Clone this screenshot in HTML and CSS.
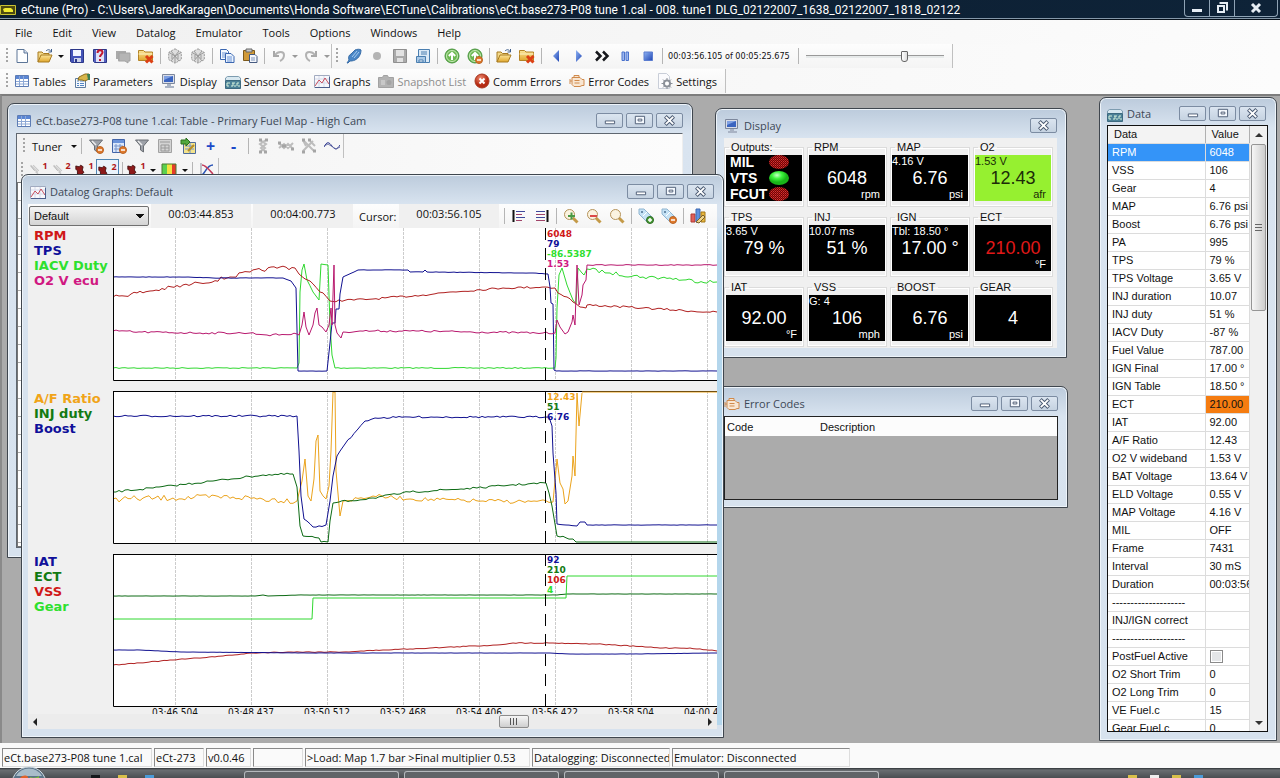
FILE: index.html
```html
<!DOCTYPE html>
<html lang="en">
<head>
    <meta charset="UTF-8">
    <meta name="viewport" content="width=device-width, initial-scale=1.0">
    <title>eCtune (Pro)</title>
    <link rel="stylesheet" href="styles.css">
</head>
<body>
    <svg class="sprite" aria-hidden="true">
        <defs>
            <linearGradient id="gBlue" x1="0" y1="0" x2="1" y2="1"><stop offset="0" stop-color="#8fb4f4"/><stop offset="1" stop-color="#2146b4"/></linearGradient>
            <linearGradient id="gFold" x1="0" y1="0" x2="0" y2="1"><stop offset="0" stop-color="#fbe59a"/><stop offset="1" stop-color="#e0a62c"/></linearGradient>
            <radialGradient id="gRed" cx="0.4" cy="0.3"><stop offset="0" stop-color="#f08a70"/><stop offset="1" stop-color="#b52a12"/></radialGradient>
            <radialGradient id="gLed" cx="0.4" cy="0.3"><stop offset="0" stop-color="#c8ffc8"/><stop offset="0.5" stop-color="#3df53d"/><stop offset="1" stop-color="#19b519"/></radialGradient>
            <pattern id="hatch" width="2" height="2" patternUnits="userSpaceOnUse"><rect width="2" height="2" fill="#6a0808"/><rect width="1" height="1" fill="#e03030"/><rect x="1" y="1" width="1" height="1" fill="#b81c1c"/></pattern>
        </defs>
        <symbol id="new" viewBox="0 0 16 16"><path d="M3 1.500h7l3.500 3.500v9.500H3z" fill="#fdfeff" stroke="#5c7597"/><path d="M10 1.500V5h3.500" fill="#d5e2f3" stroke="#5c7597"/></symbol>
        <symbol id="open" viewBox="0 0 16 16"><path d="M1 14V4h4l1.500 1.500H12V8" fill="#f3d98a" stroke="#a77a20"/><path d="M1 14l3-7h11l-3 7z" fill="url(#gFold)" stroke="#a77a20"/><path d="M9 3c2-2 4-1.500 5 .5M14.500 1v3h-3" fill="none" stroke="#3f5f8c"/></symbol>
        <symbol id="save" viewBox="0 0 16 16"><path d="M1.500 1.500h13v13h-12l-1-1z" fill="#4454b8" stroke="#2c3788"/><path d="M4 2h8v6H4z" fill="#f2f5ff"/><path d="M5 10h7v4H5z" fill="#cdd3ea"/><path d="M6 11h2v3H6z" fill="#2c3788"/></symbol>
        <symbol id="saveas" viewBox="0 0 16 16"><path d="M1.500 1.500h13v13h-12l-1-1z" fill="#5560c0" stroke="#2c3788"/><path d="M4 2h8v12H4z" fill="#dfe2f8"/><path d="M5.500 5c0-4 5-3.500 5-.5 0 2-2.500 2-2.500 4.500M8 11v2" fill="none" stroke="#c01830" stroke-width="2"/></symbol>
        <symbol id="comment" viewBox="0 0 16 16"><path d="M1 3h10v8H5l-2 3v-3H1z" fill="#aaa"/><path d="M4 5h11v8h-2v2l-3-2H4z" fill="#b5b5b5" stroke="#a2a2a2"/></symbol>
        <symbol id="folderx" viewBox="0 0 16 16"><path d="M.5 12.500v-10h5L7 4h7.500v8.500z" fill="url(#gFold)" stroke="#b48426"/><path d="M.5 6h14" stroke="#fff3c4"/><path d="M8 8l6.500 6.500M14.500 8L8 14.500" stroke="#dc4014" stroke-width="3"/></symbol>
        <symbol id="chip" viewBox="0 0 16 16"><path d="M8 .8l6.300 3.600v7.200L8 15.200l-6.300-3.600V4.400z" fill="#dedede" stroke="#999" stroke-dasharray="2 1"/><path d="M2 4.500l6 3.500 6-3.500M8 8v7M4 3l8 10M12 3L4 13M5 7v4M11 7v4" stroke="#999" fill="none"/></symbol>
        <symbol id="copy" viewBox="0 0 16 16"><path d="M1.500 1.500h6l2 2v8h-8z" fill="#f4f9ff" stroke="#3a66b0"/><path d="M3 5h5M3 7h5M3 9h3" stroke="#6d94d4"/><path d="M6.500 5.500h5.500l3 3v6H6.500z" fill="#eaf3ff" stroke="#3a66b0"/><path d="M8 9h5M8 11h5M8 13h5" stroke="#6d94d4"/></symbol>
        <symbol id="paste" viewBox="0 0 16 16"><path d="M1.500 2.500h11v10h-11z" fill="#d19a38" stroke="#7d5a1c"/><path d="M4 1h6v3H4z" fill="#c9c9c9" stroke="#666"/><path d="M7.500 6.500H13l2 2v6H7.500z" fill="#f4f6fb" stroke="#455a80"/><path d="M9 10h4M9 12h4" stroke="#7f95ba"/></symbol>
        <symbol id="undo" viewBox="0 0 16 16"><path d="M3 3v5h5" fill="none" stroke="#a8a8a8" stroke-width="2"/><path d="M4 7c3-4 9-4 9 0 0 3-2 5-4 6" fill="none" stroke="#b2b2b2" stroke-width="2"/></symbol>
        <symbol id="redo" viewBox="0 0 16 16"><path d="M13 3v5H8" fill="none" stroke="#a8a8a8" stroke-width="2"/><path d="M12 7c-3-4-9-4-9 0 0 3 2 5 4 6" fill="none" stroke="#b2b2b2" stroke-width="2"/></symbol>
        <symbol id="plug" viewBox="0 0 16 16"><path d="M1 15l2-3c-1-3 0-5 2-6l4-4c2-1 5-1 6 0 0 4-2 8-6 10-2 1-4 1-5 1l-2 2z" fill="#4a86c6" stroke="#3a6ea8"/><path d="M6 9l5-6M8 10l5-6" stroke="#a5cbef"/></symbol>
        <symbol id="dot" viewBox="0 0 16 16"><circle cx="8" cy="8" r="4" fill="#b4b4b4"/></symbol>
        <symbol id="savegrey" viewBox="0 0 16 16"><path d="M1.500 1.500h13v13h-13z" fill="#aaa" stroke="#8f8f8f"/><path d="M4 2h8v6H4zM5 10h6v4H5z" fill="#e2e2e2"/></symbol>
        <symbol id="savelog" viewBox="0 0 16 16"><path d="M3.500 1.500h11v13h-11z" fill="#dceaf7" stroke="#4b7fb0"/><path d="M1.500 8.500h9v6h-9z" fill="#a9c8e6" stroke="#4b7fb0"/><path d="M6 4h6M6 6h6M4 12h4v2H4z" stroke="#4b7fb0" fill="#fff"/></symbol>
        <symbol id="up" viewBox="0 0 16 16"><circle cx="8" cy="8" r="7" fill="#6cb851" stroke="#4a9540"/><circle cx="8" cy="8" r="5.500" fill="none" stroke="#c7e9b8"/><path d="M8 12V5M4.800 8L8 4.800 11.200 8" stroke="#fff" stroke-width="2" fill="none"/></symbol>
        <symbol id="minus" viewBox="0 0 16 16"><circle cx="12" cy="12" r="3.500" fill="#e07a2c" stroke="#b86224"/><path d="M10 12h4" stroke="#fff" stroke-width="1.500"/></symbol>
        <symbol id="plus" viewBox="0 0 16 16"><circle cx="12" cy="12" r="3.500" fill="#4d9e3a" stroke="#2c6b20"/><path d="M10 12h4M12 10v4" stroke="#fff" stroke-width="1.500"/></symbol>
        <symbol id="table" viewBox="0 0 16 16"><path d="M1.500 2.500h13v11h-13z" fill="#fff" stroke="#5d7cb4"/><path d="M2 3h12v3H2z" fill="#5b86d4"/><path d="M2 8.500h12M2 11h12M5.500 3v10M9.500 3v10" stroke="#8ea9d6"/></symbol>
        <symbol id="params" viewBox="0 0 16 16"><path d="M1.500 5.500h10v9h-10z" fill="#f6f9fd" stroke="#5f7c9e"/><path d="M3 8h2M6 8h4M3 10.500h2M6 10.500h4M3 12.500h2M6 12.500h4" stroke="#5285c4"/><path d="M5 4l6-3h4v5l-4 2-3-1-4 0z" fill="#d8b54a" stroke="#8a6c1d"/><path d="M13 1h3v6h-2z" fill="#3c7f54"/></symbol>
        <symbol id="monitor" viewBox="0 0 16 16"><path d="M1.500 1.500h12v9h-12z" fill="#d9dde8" stroke="#7c879c"/><path d="M3 3h9v6H3z" fill="#3a64c0"/><path d="M3 3h9L3 7z" fill="#7fa0e2"/><path d="M6 11h4v2H6zM4 13h9v2H4z" fill="#a9b3c4"/></symbol>
        <symbol id="sensor" viewBox="0 0 16 16"><path d="M.5 7V5l2-1.500h11l2 1.500v2" fill="#d8e8f0" stroke="#7d9cb0"/><path d="M.5 7.500h15v8H.5z" fill="#4d8298" stroke="#3d6a80"/><path d="M2 10h3M7 10h3M12 10h2M2 13h2M6 13h2M9 13h2M13 13h2M2 10v3M8 10v3M12 10v3" stroke="#d6f2dc"/></symbol>
        <symbol id="graph" viewBox="0 0 16 16"><path d="M.5 2.500h15v12H.5z" fill="#f7f8fc" stroke="#a2abc0"/><path d="M1 6h14M1 10h14M5 3v11M10 3v11" stroke="#d5daea"/><path d="M1 13l4-6 3 3 3-5 4 6" fill="none" stroke="#c8505e"/><path d="M1 14.500h15M15.500 4v10" stroke="#4d5f8c"/></symbol>
        <symbol id="camera" viewBox="0 0 16 16"><path d="M.5 4.500h4l1-2h4l1 2h5v10H.5z" fill="#b3b3b3" stroke="#a2a2a2"/><path d="M3 7h4v5H3z" fill="#c8c8c8"/><circle cx="11" cy="9.500" r="2.500" fill="#a3a3a3"/></symbol>
        <symbol id="error" viewBox="0 0 16 16"><circle cx="8" cy="8" r="7" fill="url(#gRed)" stroke="#a83820"/><path d="M5.500 5.500l5 5M10.500 5.500l-5 5" stroke="#fff" stroke-width="2"/></symbol>
        <symbol id="engine" viewBox="0 0 16 16"><path d="M1 6v5M1 8h2M3 4.500h8l2 2h2v6h-2l-2 1H5l-2-2zM5 4V2.500h5V4" fill="#f8e6d2" stroke="#d08a4c"/><path d="M5.500 7.500h5M5.500 10h5" stroke="#d08a4c"/></symbol>
        <symbol id="settings" viewBox="0 0 16 16"><path d="M1.500.5h8l3 3v12h-11z" fill="#fbfbfd" stroke="#c9ced8"/><circle cx="10" cy="10.500" r="3" fill="none" stroke="#8b9098" stroke-width="2"/><path d="M10 5v11M4.500 10.500h11M6 6.500l8 8M14 6.500l-8 8" stroke="#8b9098"/><circle cx="10" cy="10.500" r="2" fill="#fff"/></symbol>
        <symbol id="back" viewBox="0 0 16 16"><path d="M11 2v12L5 8z" fill="url(#gBlue)"/></symbol>
        <symbol id="play" viewBox="0 0 16 16"><path d="M5 2v12l6-6z" fill="url(#gBlue)"/></symbol>
        <symbol id="ffwd" viewBox="0 0 16 16"><path d="M2 3.500L6.500 8 2 12.500M9 3.500l4.500 4.500L9 12.500" fill="none" stroke="#16181c" stroke-width="2.500"/></symbol>
        <symbol id="pause" viewBox="0 0 16 16"><path d="M5 4h2.500v8.500H5zM9 4h2.500v8.500H9z" fill="#9db8f0" stroke="#4a72cc"/></symbol>
        <symbol id="stop" viewBox="0 0 16 16"><path d="M4 4h8.500v8.500H4z" fill="url(#gBlue)" stroke="#5a7cd0"/></symbol>
        <symbol id="funnel" viewBox="0 0 16 16"><path d="M1.500 2h13L9.500 8v6l-3-2V8z" fill="#9da1a8" stroke="#6a6e74"/><path d="M4 3l4 4" stroke="#eee" stroke-width="1.500"/></symbol>
        <symbol id="calc" viewBox="0 0 16 16"><path d="M1.500 1.500h12v13h-12z" fill="#dbe7f9" stroke="#4265a8"/><path d="M2 2h11v3H2z" fill="#6b93da"/><path d="M3 8h9M3 11h9M5 6v8M9 6v8" stroke="#7695cc"/></symbol>
        <symbol id="calcgrey" viewBox="0 0 16 16"><path d="M1.500 1.500h13v13h-13z" fill="#d3d3d3" stroke="#a2a2a2"/><path d="M3 4h10M4 7h8v6H4zM4 10h8M8 7v6" fill="none" stroke="#999"/></symbol>
        <symbol id="import" viewBox="0 0 16 16"><path d="M3.500 4.500h12v11h-12z" fill="#f3e38c" stroke="#4e6b9a"/><path d="M5 8h9M5 11h9M10 5v10" stroke="#6f93cc"/><path d="M1 2h5V0l4 4-4 4V6H1z" fill="#52a83e" stroke="#2b701d"/><path d="M8 13l6-6" stroke="#b98d22" stroke-width="2"/></symbol>
        <symbol id="nodesv" viewBox="0 0 16 16"><path d="M5 2l6 4-5 4 5 4M11 2L5 6l5 4-5 4" fill="none" stroke="#bdbdbd" stroke-width="2"/><path d="M4 2h3M10 2h3M4 14h3M9 14h3" stroke="#a5a5a5" stroke-width="3"/></symbol>
        <symbol id="nodesh" viewBox="0 0 16 16"><path d="M1 5l5 5 4-4 5 5M1 10l5-4 4 4 5-5" fill="none" stroke="#bdbdbd" stroke-width="2"/><path d="M0 5h3M13 11h3M4 8h4" stroke="#a5a5a5" stroke-width="3"/></symbol>
        <symbol id="nodes" viewBox="0 0 16 16"><path d="M2 2l11 11M12 3L2 13M2 2l3 6M9 3l5 5" stroke="#bdbdbd" stroke-width="2"/><path d="M1 2h3M7 2h3M1 14h3M12 13h3" stroke="#a5a5a5" stroke-width="3"/></symbol>
        <symbol id="wave" viewBox="0 0 16 16"><path d="M0 9c3-6 5-5 8-1s5 4 8-1" fill="none" stroke="#26308c"/><path d="M0 8l4-2 8 5 4-2" fill="none" stroke="#6b71a8"/></symbol>
        <symbol id="spark" viewBox="0 0 16 16"><path d="M2 2l9 9M5 2l7 7M8 10l4 4" stroke="#c8c8c8" stroke-width="1.500"/><path d="M2 3l5 6" stroke="#aaa"/></symbol>
        <symbol id="cam" viewBox="0 0 16 16"><path d="M1 3l4 1 2-2 3 2-1 4 2 3-4 3-4-1V9L1 7z" fill="#8c1a1a" stroke="#3a0909"/></symbol>
        <symbol id="heat" viewBox="0 0 16 16"><path d="M1 2h5v12H1z" fill="#5bd04e"/><path d="M6 2h5v12H6z" fill="#f3e341"/><path d="M11 2h4v12h-4z" fill="#e63c2a"/><path d="M1 2h14v12H1z" fill="none" stroke="#4c7a30"/></symbol>
        <symbol id="curve" viewBox="0 0 16 16"><path d="M2 1v13h13" fill="none" stroke="#889"/><path d="M2 13C6 13 7 3 14 3" fill="none" stroke="#2c55b6" stroke-width="1.500"/><path d="M3 3c4 0 7 5 11 9" fill="none" stroke="#c33a5a" stroke-width="1.500"/></symbol>
        <symbol id="alignl" viewBox="0 0 16 16"><path d="M2.500 2v12" stroke="#111" stroke-width="2"/><path d="M5 3.500h9M5 9.500h9" stroke="#3f4a9c"/><path d="M5 6.500h6M5 12.500h6" stroke="#a04468"/></symbol>
        <symbol id="alignr" viewBox="0 0 16 16"><path d="M13.500 2v12" stroke="#111" stroke-width="2"/><path d="M2 3.500h9M2 9.500h9" stroke="#3f4a9c"/><path d="M2 6.500h9M2 12.500h9" stroke="#a04468"/></symbol>
        <symbol id="zoom" viewBox="0 0 16 16"><path d="M10 10l4.500 4.500" stroke="#c49a48" stroke-width="3"/><circle cx="6.500" cy="6.500" r="5" fill="#fbf3e0" stroke="#b5935a"/></symbol>
        <symbol id="zoomin" viewBox="0 0 16 16"><use href="#zoom"/><path d="M5 8h7M8.500 4.500v7" stroke="#4a9a44" stroke-width="2"/></symbol>
        <symbol id="zoomout" viewBox="0 0 16 16"><use href="#zoom"/><path d="M4 8h7" stroke="#dc4a48" stroke-width="2"/></symbol>
        <symbol id="tag" viewBox="0 0 16 16"><path d="M1 1h5l8 8-5 5-8-8z" fill="#c5e2f5" stroke="#8fb4d0"/><circle cx="4" cy="4" r="1" fill="#4a6f90"/><path d="M5 8l4-4" stroke="#fff"/></symbol>
        <symbol id="bars" viewBox="0 0 16 16"><path d="M1 6h4v8H1z" fill="#e0605a" stroke="#b03a34"/><path d="M6 1h4v13H6z" fill="#5f92e0" stroke="#3a68b0"/><path d="M11 4h4v10h-4z" fill="#e8b63a" stroke="#a2761a"/><path d="M6 14l7-7 2 2-6 6z" fill="#f1d488" stroke="#7a5f2a"/></symbol>
        <symbol id="wmin" viewBox="0 0 26 14"><path d="M8.500 7.500h10v3h-10z" fill="#fff" stroke="#4b5a72"/></symbol>
        <symbol id="wmax" viewBox="0 0 26 14"><path d="M8.500 2.500h10v8h-10z" fill="#f4f8fd" stroke="#4b5a72"/><path d="M11.500 5.500h4v2h-4z" fill="#fff" stroke="#4b5a72"/></symbol>
        <symbol id="wclose" viewBox="0 0 26 14"><path d="M8.500 2.500l9 9M17.500 2.500l-9 9" stroke="#4b5a72" stroke-width="4"/><path d="M9 3l8 8M17 3l-8 8" stroke="#fff" stroke-width="2"/></symbol>
    </svg>

    <header class="titlebar">
        <svg class="app-icon" viewBox="0 0 16 10"><path d="M.5.5h15v9H.5z" fill="#4d4a10" stroke="#c9c332"/><path d="M3 4l2-1h6l2 2v2H4z" fill="#f0ea30"/></svg>
        <h1>eCtune (Pro) - C:\Users\JaredKaragen\Documents\Honda Software\ECTune\Calibrations\eCt.base273-P08 tune 1.cal - 008. tune1 DLG_02122007_1638_02122007_1818_02122</h1>
        <div class="app-buttons">
            <button aria-label="Minimize"><svg viewBox="0 0 12 12"><path d="M1 7h10v3H1z" fill="#e6edf4"/></svg></button>
            <button aria-label="Restore"><svg viewBox="0 0 12 12"><path d="M3.500 1h7.500v7.500" fill="none" stroke="#e6edf4" stroke-width="2"/><path d="M2 4h6v6H2z" fill="none" stroke="#e6edf4" stroke-width="2"/></svg></button>
            <button class="app-close" aria-label="Close"><svg viewBox="0 0 12 12"><path d="M2 2l8 8M10 2l-8 8" stroke="#e6edf4" stroke-width="3"/></svg></button>
        </div>
    </header>

    <nav class="menubar">
        <a href="#">File</a><a href="#">Edit</a><a href="#">View</a><a href="#">Datalog</a><a href="#">Emulator</a><a href="#">Tools</a><a href="#">Options</a><a href="#">Windows</a><a href="#">Help</a>
    </nav>

    <div class="toolrow">
        <div class="toolbar">
            <span class="grip"></span>
            <button aria-label="New"><svg><use href="#new"/></svg></button>
            <button aria-label="Open"><svg><use href="#open"/></svg></button>
            <button class="drop" aria-label="Open recent"></button>
            <button aria-label="Save"><svg><use href="#save"/></svg></button>
            <button aria-label="Save as"><svg><use href="#saveas"/></svg></button>
            <button aria-label="Comments"><svg><use href="#comment"/></svg></button>
            <button aria-label="Close file"><svg><use href="#folderx"/></svg></button>
            <span class="sep"></span>
            <button aria-label="Upload"><svg><use href="#chip"/></svg></button>
            <button aria-label="Download"><svg><use href="#chip"/></svg></button>
            <span class="sep"></span>
            <button aria-label="Copy"><svg><use href="#copy"/></svg></button>
            <button aria-label="Paste"><svg><use href="#paste"/></svg></button>
            <span class="sep"></span>
            <button aria-label="Undo"><svg><use href="#undo"/></svg></button>
            <button class="drop off" aria-label="Undo list"></button>
            <button aria-label="Redo"><svg><use href="#redo"/></svg></button>
            <button class="drop off" aria-label="Redo list"></button>
        </div>
        <div class="toolbar">
            <span class="grip"></span>
            <button aria-label="Connect"><svg><use href="#plug"/></svg></button>
            <button aria-label="Record"><svg><use href="#dot"/></svg></button>
            <button aria-label="Save log"><svg><use href="#savegrey"/></svg></button>
            <button aria-label="Export log"><svg><use href="#savelog"/></svg></button>
            <span class="sep"></span>
            <button aria-label="Start"><svg><use href="#up"/></svg></button>
            <button aria-label="Remove"><svg><use href="#up"/><use href="#minus"/></svg></button>
            <span class="sep"></span>
            <button aria-label="Open log"><svg><use href="#open"/></svg></button>
            <button aria-label="Close log"><svg><use href="#folderx"/></svg></button>
            <span class="sep"></span>
            <button aria-label="Back"><svg><use href="#back"/></svg></button>
            <button aria-label="Play"><svg><use href="#play"/></svg></button>
            <button aria-label="Fast forward"><svg><use href="#ffwd"/></svg></button>
            <button aria-label="Pause"><svg><use href="#pause"/></svg></button>
            <button aria-label="Stop"><svg><use href="#stop"/></svg></button>
            <span class="sep"></span>
            <label class="playtime" for="position">00:03:56.105 of 00:05:25.675</label>
            <span class="sep"></span>
            <input class="position" id="position" type="range" min="0" max="325" value="236">
        </div>
    </div>

    <div class="toolrow">
        <div class="toolbar views">
            <span class="grip"></span>
            <button><svg><use href="#table"/></svg>Tables</button>
            <button><svg><use href="#params"/></svg>Parameters</button>
            <button><svg><use href="#monitor"/></svg>Display</button>
            <button><svg><use href="#sensor"/></svg>Sensor Data</button>
            <button><svg><use href="#graph"/></svg>Graphs</button>
            <button disabled><svg><use href="#camera"/></svg>Snapshot List</button>
            <button><svg><use href="#error"/></svg>Comm Errors</button>
            <button><svg><use href="#engine"/></svg>Error Codes</button>
            <button><svg><use href="#settings"/></svg>Settings</button>
        </div>
    </div>

    <main class="desktop">
        <section class="window win-table">
            <div class="caption">
                <svg><use href="#table"/></svg>
                <h2>eCt.base273-P08 tune 1.cal: Table - Primary Fuel Map - High Cam</h2>
                <button aria-label="Minimize"><svg><use href="#wmin"/></svg></button>
                <button aria-label="Maximize"><svg><use href="#wmax"/></svg></button>
                <button aria-label="Close"><svg><use href="#wclose"/></svg></button>
            </div>
            <div class="client">
                <div class="toolbar tuner">
                    <span class="grip"></span>
                    <button class="text">Tuner</button>
                    <button class="drop" aria-label="Tuner menu"></button>
                    <span class="sep"></span>
                    <button aria-label="Remove filter"><svg><use href="#funnel"/><use href="#minus"/></svg></button>
                    <button aria-label="Remove table"><svg><use href="#calc"/><use href="#minus"/></svg></button>
                    <button aria-label="Filter"><svg><use href="#funnel"/></svg></button>
                    <button aria-label="Calculate"><svg><use href="#calcgrey"/></svg></button>
                    <button aria-label="Import"><svg><use href="#import"/></svg></button>
                    <button class="sign">+</button>
                    <button class="sign">-</button>
                    <span class="sep"></span>
                    <button aria-label="Interpolate columns"><svg><use href="#nodesv"/></svg></button>
                    <button aria-label="Interpolate rows"><svg><use href="#nodesh"/></svg></button>
                    <button aria-label="Interpolate both"><svg><use href="#nodes"/></svg></button>
                    <button aria-label="Smooth"><svg><use href="#wave"/></svg></button>
                </div>
                <div class="toolbar maps">
                    <span class="grip"></span>
                    <button class="num"><svg><use href="#spark"/></svg>1</button>
                    <button class="num"><svg><use href="#spark"/></svg>2</button>
                    <button class="num"><svg><use href="#cam"/></svg>1</button>
                    <button class="num current"><svg><use href="#cam"/></svg>2</button>
                    <span class="sep"></span>
                    <button class="num"><svg><use href="#cam"/></svg>1</button>
                    <button class="drop" aria-label="Map list"></button>
                    <button aria-label="Colours"><svg><use href="#heat"/></svg></button>
                    <button class="drop" aria-label="Colour list"></button>
                    <span class="sep"></span>
                    <button aria-label="Curves"><svg><use href="#curve"/></svg></button>
                </div>
                <div class="cells"></div>
            </div>
        </section>

        <section class="window win-display">
            <div class="caption">
                <svg><use href="#monitor"/></svg>
                <h2>Display</h2>
                <button aria-label="Close"><svg><use href="#wclose"/></svg></button>
            </div>
            <div class="client gauges">
                <fieldset>
                    <legend>Outputs:</legend>
                    <ul class="outputs">
                        <li>MIL <svg viewBox="0 0 20 14"><ellipse cx="10" cy="7" rx="10" ry="7" fill="url(#hatch)"/></svg></li>
                        <li>VTS <svg viewBox="0 0 20 14"><ellipse cx="10" cy="7" rx="10" ry="7" fill="url(#gLed)"/></svg></li>
                        <li>FCUT <svg viewBox="0 0 20 14"><ellipse cx="10" cy="7" rx="10" ry="7" fill="url(#hatch)"/></svg></li>
                    </ul>
                </fieldset>
                <fieldset><legend>RPM</legend><div class="gauge"><small></small><b>6048</b><i>rpm</i></div></fieldset>
                <fieldset><legend>MAP</legend><div class="gauge"><small>4.16 V</small><b>6.76</b><i>psi</i></div></fieldset>
                <fieldset><legend>O2</legend><div class="gauge good"><small>1.53 V</small><b>12.43</b><i>afr</i></div></fieldset>
                <fieldset><legend>TPS</legend><div class="gauge"><small>3.65 V</small><b>79 %</b><i></i></div></fieldset>
                <fieldset><legend>INJ</legend><div class="gauge"><small>10.07 ms</small><b>51 %</b><i></i></div></fieldset>
                <fieldset><legend>IGN</legend><div class="gauge"><small>Tbl: 18.50 °</small><b>17.00 °</b><i></i></div></fieldset>
                <fieldset><legend>ECT</legend><div class="gauge hot"><small></small><b>210.00</b><i>°F</i></div></fieldset>
                <fieldset><legend>IAT</legend><div class="gauge"><small></small><b>92.00</b><i>°F</i></div></fieldset>
                <fieldset><legend>VSS</legend><div class="gauge"><small>G: 4</small><b>106</b><i>mph</i></div></fieldset>
                <fieldset><legend>BOOST</legend><div class="gauge"><small></small><b>6.76</b><i>psi</i></div></fieldset>
                <fieldset><legend>GEAR</legend><div class="gauge"><small></small><b>4</b><i></i></div></fieldset>
            </div>
        </section>

        <section class="window win-errors">
            <div class="caption">
                <svg><use href="#engine"/></svg>
                <h2>Error Codes</h2>
                <button aria-label="Minimize"><svg><use href="#wmin"/></svg></button>
                <button aria-label="Maximize"><svg><use href="#wmax"/></svg></button>
                <button aria-label="Close"><svg><use href="#wclose"/></svg></button>
            </div>
            <div class="client codes">
                <table>
                    <thead><tr><th>Code</th><th>Description</th></tr></thead>
                </table>
            </div>
        </section>

        <section class="window win-graphs active">
            <div class="caption">
                <svg><use href="#graph"/></svg>
                <h2>Datalog Graphs: Default</h2>
                <button aria-label="Minimize"><svg><use href="#wmin"/></svg></button>
                <button aria-label="Maximize"><svg><use href="#wmax"/></svg></button>
                <button aria-label="Close"><svg><use href="#wclose"/></svg></button>
            </div>
            <div class="client">
                <div class="toolbar log">
                    <select aria-label="Graph set"><option>Default</option></select>
                    <output>00:03:44.853</output>
                    <output>00:04:00.773</output>
                    <label for="cursor">Cursor:</label>
                    <output id="cursor">00:03:56.105</output>
                    <span class="sep"></span>
                    <button aria-label="Set start"><svg><use href="#alignl"/></svg></button>
                    <button aria-label="Set end"><svg><use href="#alignr"/></svg></button>
                    <span class="sep"></span>
                    <button aria-label="Zoom in"><svg><use href="#zoomin"/></svg></button>
                    <button aria-label="Zoom out"><svg><use href="#zoomout"/></svg></button>
                    <button aria-label="Zoom reset"><svg><use href="#zoom"/></svg></button>
                    <span class="sep"></span>
                    <button aria-label="Add marker"><svg><use href="#tag"/><use href="#plus"/></svg></button>
                    <button aria-label="Remove marker"><svg><use href="#tag"/><use href="#minus"/></svg></button>
                    <span class="sep"></span>
                    <button aria-label="Graph setup"><svg><use href="#bars"/></svg></button>
                </div>
                <div class="charts">
                    <div class="chart">
                        <ul><li class="red">RPM</li><li class="blue">TPS</li><li class="lime">IACV Duty</li><li class="pink">O2 V ecu</li></ul>
                        <svg id="chart1" viewBox="0 0 604 153"></svg>
                    </div>
                    <div class="chart">
                        <ul><li class="orange">A/F Ratio</li><li class="green">INJ duty</li><li class="blue">Boost</li></ul>
                        <svg id="chart2" viewBox="0 0 604 153"></svg>
                    </div>
                    <div class="chart">
                        <ul><li class="blue">IAT</li><li class="green">ECT</li><li class="red">VSS</li><li class="lime">Gear</li></ul>
                        <svg id="chart3" viewBox="0 0 604 153"></svg>
                    </div>
                    <div class="times">
                        <span>03:46.504</span><span>03:48.437</span><span>03:50.512</span><span>03:52.468</span><span>03:54.406</span><span>03:56.422</span><span>03:58.504</span><span>04:00.426</span>
                    </div>
                </div>
                <div class="hscroll">
                    <button class="arrow left" aria-label="Scroll left"></button>
                    <span class="thumb"></span>
                    <button class="arrow right" aria-label="Scroll right"></button>
                </div>
            </div>
        </section>

        <section class="window win-data">
            <div class="caption">
                <svg><use href="#sensor"/></svg>
                <h2>Data</h2>
                <button aria-label="Minimize"><svg><use href="#wmin"/></svg></button>
                <button aria-label="Maximize"><svg><use href="#wmax"/></svg></button>
                <button aria-label="Close"><svg><use href="#wclose"/></svg></button>
            </div>
            <div class="client sensors">
                <div class="rows">
                    <table>
                        <thead><tr><th>Data</th><th>Value</th></tr></thead>
                        <tbody>
                            <tr class="selected"><td>RPM</td><td>6048</td></tr>
                            <tr><td>VSS</td><td>106</td></tr>
                            <tr><td>Gear</td><td>4</td></tr>
                            <tr><td>MAP</td><td>6.76 psi</td></tr>
                            <tr><td>Boost</td><td>6.76 psi</td></tr>
                            <tr><td>PA</td><td>995</td></tr>
                            <tr><td>TPS</td><td>79 %</td></tr>
                            <tr><td>TPS Voltage</td><td>3.65 V</td></tr>
                            <tr><td>INJ duration</td><td>10.07</td></tr>
                            <tr><td>INJ duty</td><td>51 %</td></tr>
                            <tr><td>IACV Duty</td><td>-87 %</td></tr>
                            <tr><td>Fuel Value</td><td>787.00</td></tr>
                            <tr><td>IGN Final</td><td>17.00 °</td></tr>
                            <tr><td>IGN Table</td><td>18.50 °</td></tr>
                            <tr><td>ECT</td><td class="warn">210.00</td></tr>
                            <tr><td>IAT</td><td>92.00</td></tr>
                            <tr><td>A/F Ratio</td><td>12.43</td></tr>
                            <tr><td>O2 V wideband</td><td>1.53 V</td></tr>
                            <tr><td>BAT Voltage</td><td>13.64 V</td></tr>
                            <tr><td>ELD Voltage</td><td>0.55 V</td></tr>
                            <tr><td>MAP Voltage</td><td>4.16 V</td></tr>
                            <tr><td>MIL</td><td>OFF</td></tr>
                            <tr><td>Frame</td><td>7431</td></tr>
                            <tr><td>Interval</td><td>30 mS</td></tr>
                            <tr><td>Duration</td><td>00:03:56</td></tr>
                            <tr><td>--------------------</td><td></td></tr>
                            <tr><td>INJ/IGN correct</td><td></td></tr>
                            <tr><td>--------------------</td><td></td></tr>
                            <tr><td><label for="postfuel">PostFuel Active</label></td><td><input type="checkbox" id="postfuel"></td></tr>
                            <tr><td>O2 Short Trim</td><td>0</td></tr>
                            <tr><td>O2 Long Trim</td><td>0</td></tr>
                            <tr><td>VE Fuel.c</td><td>15</td></tr>
                            <tr><td>Gear Fuel.c</td><td>0</td></tr>
                        </tbody>
                    </table>
                </div>
                <div class="vscroll">
                    <button class="arrow up" aria-label="Scroll up"></button>
                    <span class="thumb"></span>
                    <button class="arrow down" aria-label="Scroll down"></button>
                </div>
            </div>
        </section>
    </main>

    <footer class="statusbar">
        <span class="s-file">eCt.base273-P08 tune 1.cal</span>
        <span class="s-rom">eCt-273</span>
        <span class="s-ver">v0.0.46</span>
        <span class="s-rom"></span>
        <span class="s-load">&gt;Load: Map 1.7 bar &gt;Final multiplier 0.53</span>
        <span class="s-log">Datalogging: Disconnected</span>
        <span class="s-emu">Emulator: Disconnected</span>
    </footer>

    <div class="taskbar">
        <button class="start" aria-label="Start">
            <svg viewBox="0 0 36 36"><circle cx="18" cy="18" r="17" fill="#5b7488" stroke="#d5dfe6"/><path d="M5 10a15 15 0 0 1 26 0z" fill="#a9bcc9"/><path d="M9 12c3-3 6-3 8-1v9H8z" fill="#e2622a"/><path d="M19 11c3 1 6 1 9-1v10h-9z" fill="#7cb83c"/></svg>
        </button>
        <div class="quick"><i class="q1"></i><i class="q2"></i><i class="q3"></i></div>
        <div class="tasks"><button aria-label="Task 1"></button><button aria-label="Task 2"></button><button aria-label="Task 3"></button><button aria-label="Task 4"></button></div>
        <div class="tray"><i class="q2"></i><i class="q4"></i><i class="q2"></i><i class="q3"></i></div>
    </div>

    <script src="script.js"></script>
</body>
</html>
```
FILE: styles.css
```css
* {
    box-sizing: border-box;
}
body {
    margin: 0;
    height: 100vh;
    overflow: hidden;
    display: flex;
    flex-direction: column;
    font-family: "Open Sans", "Noto Sans", sans-serif;
    font-size: 11px;
    color: #111;
    background-color: #f8f8f8;
}
h1, h2, ul {
    margin: 0;
    padding: 0;
    font-size: inherit;
    font-weight: normal;
    list-style: none;
}
button {
    font: inherit;
    color: inherit;
    padding: 0;
    margin: 0;
    border: none;
    background: none;
}
a {
    color: inherit;
    text-decoration: none;
}
.sprite {
    position: absolute;
    width: 0;
    height: 0;
}

/* application frame */
.titlebar {
    flex: none;
    display: flex;
    height: 20px;
    align-items: center;
    padding-right: 2px;
    color: #fff;
    font-family: Roboto, "Open Sans", sans-serif;
    font-size: 12px;
    background: linear-gradient(90deg, #0b1c2e, #0e2338);
    border-bottom: 1px solid #06101a;
    box-shadow: inset 0 -1px #8497a8;
}
.app-icon {
    width: 16px;
    height: 10px;
    margin-right: 5px;
}
.titlebar h1 {
    flex: 1;
    white-space: nowrap;
    overflow: hidden;
    line-height: 18px;
}
.app-buttons {
    display: flex;
    align-self: flex-start;
    height: 17px;
    border: 1px solid #8fa3b5;
    border-top: none;
    border-radius: 0 0 4px 4px;
}
.app-buttons button {
    width: 25px;
    display: flex;
    align-items: center;
    justify-content: center;
    border-right: 1px solid #8fa3b5;
}
.app-buttons .app-close {
    width: 42px;
    border: none;
}
.app-buttons svg {
    width: 12px;
    height: 12px;
}
.menubar {
    flex: none;
    display: flex;
    gap: 20px;
    height: 24px;
    padding-left: 15px;
    align-items: center;
    background: linear-gradient(90deg, #f0f0f0, #fcfcfc);
}

/* toolbars */
.toolrow {
    flex: none;
    display: flex;
    height: 25px;
    background: linear-gradient(90deg, #f2f2f2, #fcfcfc);
}
.toolbar {
    display: flex;
    align-items: center;
    height: 24px;
    white-space: nowrap;
    background: linear-gradient(#fdfdfd, #f4f4f4);
    border-right: 1px solid #c0c0c0;
}
.toolbar svg {
    flex: none;
    width: 16px;
    height: 16px;
}
.toolbar button {
    width: 23px;
    height: 22px;
    display: flex;
    align-items: center;
    justify-content: center;
}
.toolbar .grip {
    flex: none;
    width: 2px;
    height: 16px;
    margin: 0 2px 0 6px;
    background: repeating-linear-gradient(#a5a5a5 0 2px, transparent 2px 4px);
}
.toolbar .sep {
    flex: none;
    width: 1px;
    height: 16px;
    margin: 0 2px 0 3px;
    background-color: #b5b5b5;
}
.toolbar .drop {
    width: 9px;
}
.drop::after {
    content: "";
    border: 3px solid transparent;
    border-top-color: #111;
    border-bottom: none;
}
.drop.off::after {
    border-top-color: #999;
}
.toolbar + .toolbar .grip {
    margin: 0 4px;
}
.playtime {
    width: 130px;
    padding-left: 3px;
    font-family: "DejaVu Sans Condensed", "DejaVu Sans", sans-serif;
    font-size: 9px;
}
.position {
    appearance: none;
    width: 138px;
    height: 20px;
    margin: 0 8px 0 5px;
    background: none;
}
.position::-webkit-slider-runnable-track {
    height: 3px;
    background-color: #e7eaea;
    border-top: 1px solid #999;
}
.position::-webkit-slider-thumb {
    appearance: none;
    width: 7px;
    height: 11px;
    margin-top: -5px;
    border: 1px solid #666;
    border-radius: 1px 1px 3px 3px;
    background: linear-gradient(90deg, #fff, #ddd);
}
.toolbar.views {
    padding-right: 4px;
}
.toolbar.views button {
    width: auto;
    gap: 3px;
    padding: 0 4px;
}
.toolbar button:disabled {
    color: #8c8c8c;
}

/* child windows */
.desktop {
    flex: 1;
    min-height: 0;
    position: relative;
    overflow: hidden;
    background-color: #ababab;
    border-top: 2px solid #7d7d7d;
    border-left: 2px solid #8a8a8a;
}
.window {
    position: absolute;
    display: flex;
    flex-direction: column;
    padding: 0 9px 9px 8px;
    border: 1px solid #3f464e;
    border-radius: 7px 7px 0 0;
    background: linear-gradient(#bccbdc, #d9e4f0 30px, #d7e2ee);
    box-shadow: inset 0 0 0 1px #eef4fa;
}
.window.active {
    padding: 0 6px 8px 6px;
    background:
        linear-gradient(#d9e4f0, #b4d6ec 40px) right 40px / 7px 510px no-repeat,
        linear-gradient(#bccbdc, #d9e4f0 30px, #d7e2ee 200px);
}
.caption {
    flex: none;
    display: flex;
    align-items: center;
    gap: 3px;
    height: 29px;
    padding-top: 4px;
    color: #3d4856;
}
.caption svg {
    width: 16px;
    height: 16px;
}
.caption h2 {
    flex: 1;
    margin-left: 1px;
    white-space: nowrap;
    font-size: 11px;
}
.caption button {
    width: 27px;
    height: 15px;
    border: 1px solid #7c8ca2;
    border-radius: 2px;
    background: linear-gradient(#dbe5f0, #c5d2e1);
    display: flex;
}
.caption button svg {
    width: 25px;
    height: 13px;
}
.client {
    flex: 1;
    min-height: 0;
    background-color: #f0f0f0;
}
.win-table {
    left: 5px;
    top: 7px;
    width: 686px;
    height: 455px;
}
.win-table .client {
    display: flex;
    flex-direction: column;
    overflow: hidden;
    border: 1px solid #5f6770;
    border-right-color: #eee;
    background: linear-gradient(90deg, #f2f2f2, #fcfcfc);
}
.win-display {
    left: 713px;
    top: 12px;
    width: 352px;
    height: 250px;
}
.win-errors {
    left: 713px;
    top: 290px;
    width: 353px;
    height: 122px;
    padding-bottom: 7px;
}
.win-graphs {
    left: 19px;
    top: 78px;
    width: 703px;
    height: 564px;
}
.win-graphs .caption {
    padding-left: 2px;
    padding-right: 3px;
}
.win-data {
    right: 3px;
    top: 1px;
    width: 178px;
    height: 644px;
    padding: 0 8px 8px 7px;
}
.win-data .caption {
    height: 27px;
    padding-right: 2px;
}

/* fuel map window */
.tuner, .maps {
    flex: none;
    width: max-content;
    background: none;
}
.toolbar.tuner .grip {
    margin: 0 0 0 6px;
}
.tuner .text {
    width: 44px;
}
.toolbar .sign {
    color: #1c49c8;
    font-size: 16px;
    font-weight: bold;
}
.toolbar .num {
    align-items: flex-start;
    color: #b01818;
    font-size: 9px;
    font-weight: bold;
}
.num svg {
    width: 13px;
    height: 14px;
    margin-top: 4px;
}
.toolbar .current {
    border: 1px solid #4f86b4;
    background-color: #eaf3fb;
}
.cells {
    flex: 1;
    border: 1px solid #777;
    background: repeating-linear-gradient(#fff 0 17px, #aaa 17px 18px);
}

/* gauges */
.gauges {
    display: grid;
    grid-template-columns: repeat(4, 80px);
    grid-auto-rows: 67px;
    gap: 3px;
    padding-top: 2px;
    font-family: "Liberation Sans", Arial, sans-serif;
}
fieldset {
    min-width: 0;
    margin: 0;
    padding: 1px 1px 0 1px;
    border: 1px solid #dcdcdc;
    box-shadow: inset 0 0 0 1px #fff;
}
legend {
    margin-left: 3px;
    padding: 0 2px;
    line-height: 14px;
}
.gauge, .outputs {
    height: 46px;
    color: #fff;
    background-color: #000;
}
.gauge {
    display: grid;
    grid-template-rows: 13px 18px 15px;
    line-height: 13px;
}
.gauge small, .gauge i {
    font-size: 11px;
    font-style: normal;
}
.gauge small {
    white-space: nowrap;
}
.gauge b {
    text-align: center;
    font-size: 18px;
    font-weight: normal;
    line-height: 20px;
}
.gauge i {
    text-align: right;
    padding-right: 5px;
    line-height: 16px;
}
.gauge.good {
    color: #1c2c08;
    background-color: #96f030;
}
.gauge.hot b {
    color: #e01818;
}
.outputs {
    display: grid;
    grid-template-rows: repeat(3, 16px);
    align-content: center;
    overflow: hidden;
}
.outputs li {
    display: flex;
    justify-content: space-between;
    align-items: center;
    padding: 0 13px 0 4px;
    font-size: 14px;
    font-weight: bold;
}
.outputs svg {
    flex: none;
    width: 20px;
    height: 14px;
}

/* error codes */
.codes {
    border: 1px solid #222;
    background-color: #ababab;
    font-family: "Liberation Sans", Arial, sans-serif;
}
table {
    width: 100%;
    border-collapse: collapse;
    table-layout: fixed;
}
.codes th {
    height: 19px;
    padding: 0 2px;
    text-align: left;
    font-weight: normal;
    background-color: #fcfcfc;
}
.codes th:first-child {
    width: 93px;
}

/* datalog graphs */
.win-graphs .client {
    display: flex;
    flex-direction: column;
}
.toolbar.log {
    flex: none;
    border: none;
    background-color: #fcfcfc;
}
.log select {
    appearance: none;
    width: 120px;
    height: 20px;
    margin: 0 2px 0 1px;
    padding: 0 4px;
    font-family: "Liberation Sans", Arial, sans-serif;
    font-size: 11px;
    color: #111;
    border: 1px solid #707070;
    border-radius: 2px;
    background:
        conic-gradient(from -45deg at 50% 100%, #111 90deg, transparent 0) right 4px center / 8px 4px no-repeat,
        linear-gradient(#f4f4f4, #d4d4d4);
}
.log output {
    width: 100px;
    height: 24px;
    margin-right: 2px;
    text-align: center;
    line-height: 20px;
    background-color: #f0f0f0;
}
.log label {
    width: 44px;
    padding-left: 4px;
}
.charts {
    flex: 1;
    min-height: 0;
    overflow: hidden;
    display: grid;
    grid-template-rows: 153px 153px 153px 8px;
    row-gap: 10px;
    font-family: "DejaVu Sans", Verdana, sans-serif;
}
.chart {
    display: flex;
    justify-content: space-between;
}
.chart ul {
    padding-left: 6px;
    font-size: 13px;
    font-weight: bold;
    line-height: 15px;
}
.chart > svg {
    width: 604px;
    height: 153px;
    background-color: #fff;
}
.chart text {
    font-size: 9px;
    font-weight: bold;
}
.red { color: #d01818; }
.blue { color: #10109a; }
.lime { color: #2ee02e; }
.pink { color: #d01882; }
.orange { color: #f0a418; }
.green { color: #127a12; }
.times {
    display: grid;
    grid-template-columns: repeat(8, 76px);
    height: 8px;
    margin: -10px 0 0 109px;
    overflow: hidden;
    text-align: center;
    font-family: "DejaVu Sans Condensed", "DejaVu Sans", sans-serif;
    font-size: 10px;
    line-height: 12px;
}
.hscroll {
    flex: none;
    display: flex;
    align-items: center;
    justify-content: space-between;
    height: 15px;
    padding: 0 5px;
    background-color: #ececec;
}
.hscroll .thumb {
    width: 30px;
    height: 13px;
    margin-left: 282px;
    border: 1px solid #8c8c8c;
    border-radius: 2px;
    background: repeating-linear-gradient(90deg, #555 0 1px, transparent 1px 3px) center / 8px 7px no-repeat, linear-gradient(#f6f6f6, #cfcfcf);
}
.arrow::after {
    content: "";
    display: block;
    border: 4px solid transparent;
}
.arrow.left::after { border-right-color: #222; border-left: none; }
.arrow.right::after { border-left-color: #222; border-right: none; }
.arrow.up::after { border-bottom-color: #333; border-top: none; }
.arrow.down::after { border-top-color: #333; border-bottom: none; }

/* sensor list */
.sensors {
    display: flex;
    border: 1px solid #111;
    font-family: "Liberation Sans", Arial, sans-serif;
}
.rows {
    flex: 1;
    min-width: 0;
    overflow: hidden;
    background-color: #fff;
}
.rows th, .rows td {
    height: 18px;
    padding: 0 0 0 4px;
    text-align: left;
    font-weight: normal;
    white-space: nowrap;
    overflow: hidden;
    border-right: 1px solid #dcdcdc;
    border-bottom: 1px solid #dcdcdc;
}
.rows th {
    height: 17px;
    padding-left: 6px;
    background-color: #f3f3f3;
    border-right-color: #b0b0b0;
}
.rows th:first-child {
    width: 97px;
}
.rows .selected td {
    color: #fff;
    background-color: #3494f8;
}
.rows .warn {
    background-color: #f57c10;
}
.rows input {
    display: block;
    width: 13px;
    height: 13px;
    margin: 0;
    appearance: none;
    border: 1px solid #8a8a8a;
    background-color: #e4e6e8;
    box-shadow: inset 0 0 0 1px #fff;
}
.vscroll {
    display: flex;
    flex-direction: column;
    align-items: center;
    width: 17px;
    padding: 7px 0 6px;
    background-color: #f0f0f0;
}
.vscroll .thumb {
    width: 15px;
    height: 167px;
    margin: 7px 0 auto;
    border: 1px solid #959595;
    border-radius: 2px;
    background: repeating-linear-gradient(#666 0 1px, transparent 1px 3px) center / 7px 8px no-repeat, linear-gradient(90deg, #f6f6f6, #cdcdcd);
}

/* bottom bars */
.statusbar {
    flex: none;
    display: flex;
    gap: 2px;
    height: 25px;
    padding: 5px 0 1px 2px;
    background-color: #fafafa;
}
.statusbar span {
    height: 19px;
    padding-left: 1px;
    line-height: 18px;
    white-space: nowrap;
    overflow: hidden;
    border: 1px solid #8a8a8a;
    border-right-color: #ddd;
    border-bottom-color: #ddd;
}
.s-file { width: 150px; }
.s-rom { width: 50px; }
.s-ver { width: 45px; }
.s-load { width: 225px; }
.s-log { width: 138px; }
.s-emu { width: 178px; }
.taskbar {
    flex: none;
    display: flex;
    height: 10px;
    padding: 0 77px 0 11px;
    background: linear-gradient(#2e3236, #6a6e72 2px, #4a4e52);
}
.start svg {
    display: block;
    width: 36px;
    height: 36px;
    margin-top: -2px;
}
.quick {
    display: flex;
    gap: 18px;
    width: 197px;
    padding: 7px 0 0 44px;
}
.quick i, .tray i {
    width: 9px;
    height: 3px;
}
.q1 { background-color: #15181b; }
.q2 { background-color: #d8c04a; }
.q3 { background-color: #4a9ad8; }
.q4 { background-color: #eee; }
.tasks {
    flex: 1;
    display: flex;
    gap: 5px;
}
.tasks button {
    width: 155px;
    margin-top: 3px;
    border: 1px solid #b5b9bd;
    border-bottom: none;
    border-radius: 3px 3px 0 0;
    background-color: #606468;
}
.tray {
    display: flex;
    gap: 13px;
    padding-top: 7px;
}
```
FILE: script.js
```js
const colors = { red: "#b02020", blue: "#101090", lime: "#30d830", pink: "#b8186e", orange: "#eba31c", green: "#0c6a14" };

// Small repeatable jitter so the traces look like logged samples
let seed = 7;
function jitter(size) {
    seed = (seed * 16807) % 2147483647;
    return (seed / 2147483647 - 0.5) * 2 * size;
}

function trace(name, noise, points) {
    const keys = points.split(" ").map(p => p.split(",").map(Number));
    let d = "M" + keys[0];
    for (let i = 1; i < keys.length; i++) {
        const [x0, y0] = keys[i - 1];
        const [x1, y1] = keys[i];
        for (let x = x0 + 3; x < x1 - 2; x += 3) {
            const y = y0 + (y1 - y0) * (x - x0) / (x1 - x0) + jitter(noise);
            d += "L" + x + "," + y.toFixed(1);
        }
        d += "L" + x1 + "," + y1;
    }
    return `<path d="${d}" fill="none" stroke="${colors[name]}"/>`;
}

function draw(id, traces, values) {
    let out = "";
    for (let x = 62; x < 604; x += 76) {
        out += `<path d="M${x + 0.5} 0V153" stroke="#ccc" stroke-dasharray="3 1"/>`;
    }
    out += traces.join("");
    out += '<path d="M432.500 0V153" stroke="#000" stroke-dasharray="12 8"/>';
    out += '<path d="M.5 0V152.500H604" fill="none" stroke="#000"/>';
    if (id !== "chart1") {
        out += '<path d="M0 .5H604" stroke="#000"/>';
    }
    values.forEach(([name, text], i) => {
        out += `<text x="434" y="${9 + i * 10}" class="${name}" fill="currentColor">${text}</text>`;
    });
    document.getElementById(id).innerHTML = out;
}

draw("chart1", [
    trace("lime", 0.5, "0,140 184,140 186,135 187,64 189,42 191,36 194,52 200,64 206,72 208,36 215,37 217,97 219,127 222,140 442,140 443,130 444,80 446,47 449,40 454,57 460,72 463,76 465,40 469,45 471,47 474,41"),
    trace("lime", 2, "474,41 497,45 530,49 557,50 570,52 604,54"),
    trace("red", 2, "0,69 37,63 87,55 117,49 137,44 167,39 182,40 186,46 197,53 207,64 217,73"),
    trace("red", 1, "217,73 260,71 310,67 337,64 390,60 432,59 442,60 445,65 454,69 467,79 473,80 474,77 530,80 594,84 604,84"),
    trace("blue", 0.2, "0,49 75,49 100,50 170,50 178,53 183,60 185,143 214,143 217,115 219,95 222,95 223,81 226,81 227,66 230,49 232,48 245,42 295,42 297,44 310,44 312,42 314,44 420,45 435,46 437,59 438,75 440,76 441,142 443,143 604,143"),
    trace("pink", 1, "0,103 14,103 20,104 87,105 137,105 154,107 184,106 186,107 189,97 191,84 193,99 196,107 200,97 202,85 204,80 206,97 209,99 213,104 216,97 218,80 219,97 221,37 222,97 224,105 228,110 230,104 247,103 297,103 430,105 442,105 444,92 447,99 452,106 455,104 459,94 460,87 462,97 464,37 466,77 469,67 470,57 473,52 474,37"),
    trace("pink", 0.4, "474,37 604,37")
], [["red", "6048"], ["blue", "79"], ["lime", "-86.5387"], ["pink", "1.53"]]);

draw("chart2", [
    trace("orange", 3, "0,108 60,107 120,106 184,110"),
    trace("orange", 2, "184,110 189,90 192,68 195,105 198,110 201,88 203,50 205,44 207,100 213,108 216,95 218,60 220,1 222,1 223,80 227,125 230,110 260,105 297,108 370,110 440,111 444,68 447,92 450,98 452,113 455,110 459,85 460,65 462,85 464,2 466,35 469,2"),
    trace("green", 1, "0,101 40,97 100,90 150,84 180,83 184,96 187,135 190,145 206,147 208,151 215,151 217,130 220,112 226,111 260,107 297,101 364,97 397,94 433,92 436,102 439,115 444,145 460,148 463,151"),
    trace("green", 0, "463,151 604,151"),
    trace("blue", 0.9, "0,25 184,25 186,60 188,105 191,128 200,136 213,134 217,110 220,85 224,65 232,53 245,38 252,30 262,27 297,26 436,26 439,35 440,62 443,102 444,133"),
    trace("blue", 0.2, "444,133 464,135 467,131 472,131 474,134 604,134")
], [["orange", "12.43"], ["green", "51"], ["blue", "6.76"]]);

draw("chart3", [
    trace("green", 0.1, "0,42 142,42 150,41 155,42 185,41 444,41 454,40 604,40"),
    trace("lime", 0, "0,65 199,65 200,44 453,44 454,22 604,22"),
    trace("red", 0.4, "0,111 60,106 110,102 140,99 175,98 230,98 270,96 317,94 384,91 400,89 440,89 484,90 550,94 577,94 584,95 604,97"),
    trace("blue", 0.1, "0,96 27,96 68,98 200,99 434,99 457,100 520,100 604,99")
], [["blue", "92"], ["green", "210"], ["red", "106"], ["lime", "4"]]);

// The off-scale A/F trace runs along the top frame line
document.getElementById("chart2").insertAdjacentHTML("beforeend", trace("orange", 0, "469,1 604,1"));
```
